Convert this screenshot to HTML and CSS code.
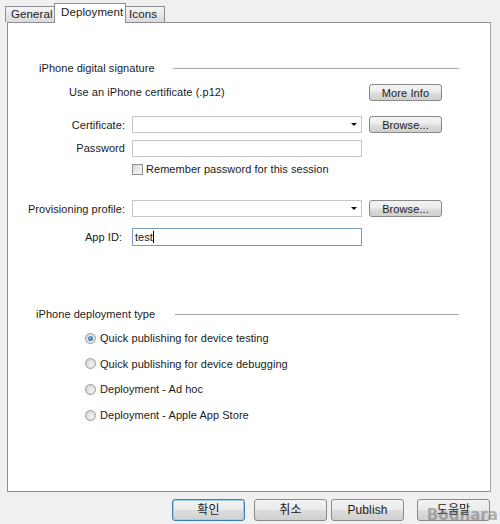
FILE: index.html
```html
<!DOCTYPE html>
<html>
<head>
<meta charset="utf-8">
<link rel="stylesheet" href="styles.css">
</head>
<body>
<div class="window">
  <div class="tabs">
    <div class="tab">General</div>
    <div class="tab active">Deployment</div>
    <div class="tab">Icons</div>
  </div>
  <div class="panel">
    <div class="heading h1"><span>iPhone digital signature</span><div class="rule"></div></div>
    <div class="form">
      <div class="row r-use">
        <div class="span-text">Use an iPhone certificate (.p12)</div>
        <button class="btn">More Info</button>
      </div>
      <div class="row r-cert">
        <label>Certificate:</label>
        <div class="select"><span class="arrow"></span></div>
        <button class="btn">Browse...</button>
      </div>
      <div class="row r-pass">
        <label>Password</label>
        <div class="input"></div>
      </div>
      <div class="row r-check">
        <div class="check-cell"><span class="checkbox"></span>Remember password for this session</div>
      </div>
      <div class="row r-prov">
        <label>Provisioning profile:</label>
        <div class="select"><span class="arrow"></span></div>
        <button class="btn">Browse...</button>
      </div>
      <div class="row r-app">
        <label>App ID:</label>
        <div class="input focus">test<span class="caret"></span></div>
      </div>
    </div>
    <div class="heading h2"><span>iPhone deployment type</span><div class="rule"></div></div>
    <div class="radios">
      <div class="radio-row"><span class="radio checked"></span>Quick publishing for device testing</div>
      <div class="radio-row"><span class="radio"></span>Quick publishing for device debugging</div>
      <div class="radio-row"><span class="radio"></span>Deployment - Ad hoc</div>
      <div class="radio-row"><span class="radio"></span>Deployment - Apple App Store</div>
    </div>
  </div>
  <div class="footer">
    <button class="btn big default">확인</button>
    <button class="btn big">취소</button>
    <button class="btn big">Publish</button>
    <button class="btn big help">도움말</button>
  </div>
  <div class="watermark">Bodnara</div>
</div>
</body>
</html>
```

FILE: styles.css
```css
* { box-sizing: border-box; }
html, body { margin: 0; padding: 0; }
body {
  background: #f0f0f0;
  font-family: "Liberation Sans", Arial, "Noto Sans CJK KR", sans-serif;
  font-size: 11px;
  letter-spacing: 0.05px;
  color: #1a1a1a;
  width: 500px;
  height: 524px;
  overflow: hidden;
}
.window { position: relative; height: 524px; }

.tabs {
  display: flex;
  align-items: flex-end;
  height: 22px;
  padding-left: 5px;
  position: relative;
  z-index: 2;
}
.tab {
  height: 16px;
  line-height: 15px;
  border: 1px solid #8c8e94;
  border-bottom: none;
  background: linear-gradient(#f6f6f6, #dadada);
  color: #1a1a1a;
  font-size: 11.5px;
  letter-spacing: 0.1px;
}
.tab:first-child { width: 50px; padding-left: 5px; }
.tab.active {
  width: 72px;
  height: 20px;
  background: #fff;
  padding-left: 6px;
  line-height: 17px;
  margin-bottom: -1px;
  margin-left: -1px;
  margin-right: -1px;
}
.tab:last-child { width: 40px; padding-left: 3px; }

.panel {
  margin-left: 7px;
  width: 484px;
  height: 470px;
  background: #fff;
  border: 1px solid #8c8e94;
  border-right-color: #a6a6a6;
  position: relative;
  z-index: 1;
}

.heading {
  display: flex;
  align-items: center;
  height: 14px;
  width: 451px;
}
.heading span { white-space: nowrap; }
.heading .rule { flex: 1; height: 1px; background: #a9a9a9; margin-left: 18px; margin-top: 1px; }
.h1 { margin-top: 38px; padding-left: 31px; }
.h2 { margin-top: 61px; padding-left: 28px; }
.h2 .rule { margin-left: 20px; }

.form { display: flex; flex-direction: column; }
.row {
  display: grid;
  grid-template-columns: 117px 230px 73px;
  column-gap: 7px;
  align-items: center;
}
.row label { text-align: right; white-space: nowrap; }
.r-use { margin-top: 9px; height: 17px; }
.r-use .span-text { grid-column: 1 / 3; padding-left: 61px; padding-bottom: 2px; }
.r-use .btn { grid-column: 3; }
.r-cert { margin-top: 15px; height: 17px; }
.r-pass { margin-top: 7px; height: 17px; }
.r-pass label { padding-bottom: 2px; }
.r-check { margin-top: 5px; height: 14px; }
.check-cell { grid-column: 2 / 4; display: flex; align-items: center; white-space: nowrap; }
.r-prov { margin-top: 24px; height: 17px; }
.r-app { margin-top: 11px; height: 18px; }
.r-app label { padding-right: 3px; }

.select, .input {
  height: 17px;
  border: 1px solid #c3c6cc;
  background: #fff;
  position: relative;
}
.r-app .input { height: 18px; }
.input.focus {
  border-color: #7a9cc0;
  padding-left: 2px;
  display: flex;
  align-items: center;
}
.caret { display: inline-block; width: 1px; height: 12px; background: #000; }
.arrow {
  position: absolute;
  right: 4px;
  top: 6px;
  width: 0; height: 0;
  border-left: 3px solid transparent;
  border-right: 3px solid transparent;
  border-top: 3px solid #111;
}

.btn {
  font: inherit;
  letter-spacing: 0.1px;
  color: #1a1a1a;
  height: 17px;
  padding: 0;
  border: 1px solid #8a8a8a;
  border-radius: 3px;
  background: linear-gradient(#f3f3f3 0%, #ebebeb 48%, #dddddd 52%, #cfcfcf 100%);
  line-height: 14px;
  text-align: center;
}

.checkbox {
  display: inline-block;
  width: 11px; height: 11px;
  border: 1px solid #8f8f8f;
  background: linear-gradient(135deg, #dcdcdc, #f5f5f5);
  margin-right: 3px;
}

.radios { display: flex; flex-direction: column; padding-left: 77px; margin-top: 10px; }
.radio-row { display: flex; align-items: center; height: 14px; margin-bottom: 11.7px; white-space: nowrap; }
.radio {
  display: inline-block;
  width: 11px; height: 11px;
  border-radius: 50%;
  border: 1px solid #9a9a9a;
  background: radial-gradient(circle at 60% 60%, #f4f4f4, #cfcfcf);
  margin-right: 4px;
  position: relative;
}
.radio.checked::after {
  content: "";
  position: absolute;
  left: 2px; top: 2px;
  width: 5px; height: 5px;
  border-radius: 50%;
  background: radial-gradient(circle at 40% 40%, #6fb3e0, #15507f);
}

.footer {
  display: flex;
  padding-left: 172px;
  margin-top: 7px;
  height: 22px;
}
.btn.big { width: 73px; height: 22px; line-height: 19px; margin-right: 9px; font-size: 12px; }
.footer .btn:nth-child(2) { margin-right: 4px; }
.footer .btn:nth-child(3) { margin-right: 13px; }
.btn.default { border-color: #3a7fb3; box-shadow: inset 0 0 0 1px #9ed0ef; }
.help { margin-right: 0; }

.watermark {
  position: absolute;
  right: 2px;
  bottom: 1px;
  font-family: "DejaVu Sans", sans-serif;
  font-weight: bold;
  font-size: 15px;
  line-height: 16px;
  color: rgba(110, 110, 110, 0.5);
  z-index: 5;
}
```
